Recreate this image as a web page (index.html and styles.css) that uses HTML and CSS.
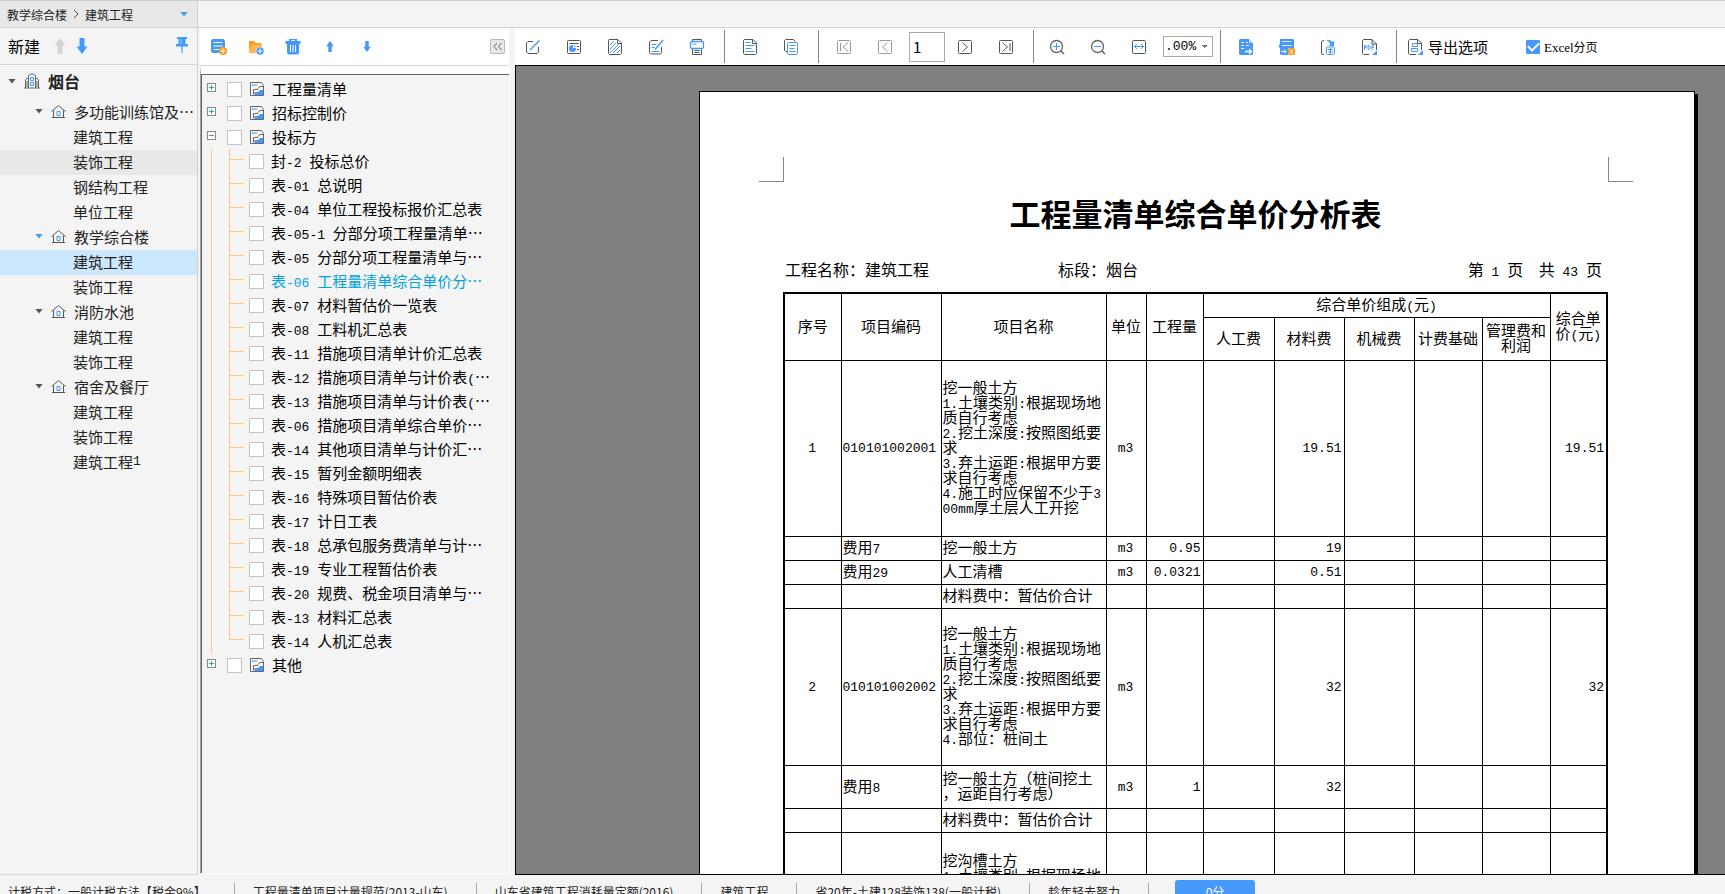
FILE: index.html
```html
<!DOCTYPE html>
<html lang="zh-CN">
<head>
<meta charset="utf-8">
<title>报表</title>
<link rel="stylesheet" href="styles.css">
</head>
<body>
<svg class="defs" aria-hidden="true">
  <symbol id="house" viewBox="0 0 15 15"><path d="M.5 7.500 7.500 1.500l7 6M2.500 6.500v7.500M12.500 6.500v7.500M1 13.500h13" fill="none" stroke="#555"/><path d="M6 7.500h3v4H6z" fill="none" stroke="#4499fb"/></symbol>
  <symbol id="report" viewBox="0 0 14 14"><path d="M.5.5h11l2 3v10H.5z" fill="#f8f8f8" stroke="#666"/><path d="M2 3h5" stroke="#8cc4ff" stroke-width="2"/><path d="M3.500 12.500V7.500h4l2-3h4" fill="none" stroke="#666"/><path d="M4.500 13v-3H8l2-2h3v5z" fill="#4499fb"/></symbol>
  <symbol id="up" viewBox="0 0 12 16"><path d="M6 0l5.500 7.500H8.500V16h-5V7.500H.5z" fill="currentColor"/></symbol>
  <symbol id="down" viewBox="0 0 12 16"><path d="M6 16l5.500-7.500H8.500V0h-5v8.500H.5z" fill="currentColor"/></symbol>
</svg>
<header class="topbar">
  <button class="crumb" type="button"><span>教学综合楼</span><svg class="chev" viewBox="0 0 6 10"><path d="M1 1l4 4-4 4" fill="none" stroke="#444"/></svg><span>建筑工程</span><i class="tri blue"></i></button>
</header>
<div class="main">
  <aside class="sidebar">
    <div class="side-head">
      <button type="button" class="new">新建</button>
      <button type="button" class="arrow off" aria-label="上移"><svg viewBox="0 0 12 16"><use href="#up"/></svg></button>
      <button type="button" class="arrow" aria-label="下移"><svg viewBox="0 0 12 16"><use href="#down"/></svg></button>
      <button type="button" class="pin" aria-label="固定"><svg viewBox="0 0 12 16"><path d="M1 0h10v2H9.500v5H12v2.500H0V7h2.500V2H1z" fill="#4499fb"/><path d="M5 2v5" stroke="#a9d0ff"/><path d="M6 9v7" stroke="#4499fb" stroke-width="1.200"/></svg></button>
    </div>
    <ul class="projects">
      <li class="root"><i class="tri"></i><svg class="build" viewBox="0 0 16 16"><path d="M4.500 15V2.500l2-1.500h3l2 1.500V15M4 5.500H2.500L1.500 7v8M12 5.500h1.500l1 1.500v8M0 15h16M3 8v6M13 8v6" fill="none" stroke="#666"/><path d="M6.500 4.500h3v3h-3zM6.500 9.500h3v3h-3z" fill="none" stroke="#4499fb"/></svg><b>烟台</b></li>
      <li class="group"><i class="tri"></i><svg><use href="#house"/></svg>多功能训练馆及…</li>
      <li class="unit">建筑工程</li>
      <li class="unit hover">装饰工程</li>
      <li class="unit">钢结构工程</li>
      <li class="unit">单位工程</li>
      <li class="group"><i class="tri blue"></i><svg><use href="#house"/></svg>教学综合楼</li>
      <li class="unit selected">建筑工程</li>
      <li class="unit">装饰工程</li>
      <li class="group"><i class="tri"></i><svg><use href="#house"/></svg>消防水池</li>
      <li class="unit">建筑工程</li>
      <li class="unit">装饰工程</li>
      <li class="group"><i class="tri"></i><svg><use href="#house"/></svg>宿舍及餐厅</li>
      <li class="unit">建筑工程</li>
      <li class="unit">装饰工程</li>
      <li class="unit">建筑工程<span class="n">1</span></li>
    </ul>
  </aside>

  <section class="reports">
    <div class="rep-head">
      <button type="button" aria-label="新建报表"><svg viewBox="0 0 16 16"><path d="M1.500 0h11L14 2v7a4 4 0 0 0-5 5v0H1.500L0 12.500v-11z" fill="#4499fb"/><path d="M2.500 3.500h9M2.500 7h9M2.500 10.500h6" stroke="#fff"/><circle cx="12" cy="12" r="4" fill="#ff9c1a"/><path d="M9.500 12h5M12 9.500v5" stroke="#fff"/></svg></button>
      <button type="button" aria-label="新建文件夹"><svg viewBox="0 0 16 16"><path d="M1 2h5l2 2h5v2H4L1 12z" fill="#ff9c1a"/><path d="M3.500 5.500H14V14H1z" fill="#ffb24d"/><circle cx="12" cy="12" r="4" fill="#4499fb" stroke="#fff" stroke-width=".5"/><path d="M9.500 12h5M12 9.500v5" stroke="#fff"/></svg></button>
      <button type="button" aria-label="删除"><svg viewBox="0 0 16 16"><path d="M4 0h8v2h3.500v3H14v9l-1.500 1.500h-9L2 14V5H.5V2H4z" fill="#4499fb"/><path d="M5.500 6v7M8 6v7M10.500 6v7" stroke="#fff"/><path d="M6 1.500h4" stroke="#cfe5ff"/></svg></button>
      <button type="button" aria-label="上移" class="sm"><svg viewBox="0 0 12 16"><use href="#up"/></svg></button>
      <button type="button" aria-label="下移" class="sm"><svg viewBox="0 0 12 16"><use href="#down"/></svg></button>
      <button type="button" class="collapse" aria-label="收起"><svg viewBox="0 0 13 13"><path d="M6 3 3 6.500l3 3.500M10.500 3l-3 3.500 3 3.500" fill="none" stroke="#666"/></svg></button>
    </div>
    <div class="rep-tree">
      <div class="node"><button type="button" class="exp plus" aria-label="展开"></button><label><input type="checkbox"><svg><use href="#report"/></svg><span>工程量清单</span></label></div>
      <div class="node"><button type="button" class="exp plus" aria-label="展开"></button><label><input type="checkbox"><svg><use href="#report"/></svg><span>招标控制价</span></label></div>
      <div class="node"><button type="button" class="exp" aria-label="折叠"></button><label><input type="checkbox"><svg><use href="#report"/></svg><span>投标方</span></label></div>
      <ul class="leaves">
        <li><label><input type="checkbox"><span>封<span class="n">-2 </span>投标总价</span></label></li>
        <li><label><input type="checkbox"><span>表<span class="n">-01 </span>总说明</span></label></li>
        <li><label><input type="checkbox"><span>表<span class="n">-04 </span>单位工程投标报价汇总表</span></label></li>
        <li><label><input type="checkbox"><span>表<span class="n">-05-1 </span>分部分项工程量清单…</span></label></li>
        <li><label><input type="checkbox"><span>表<span class="n">-05 </span>分部分项工程量清单与…</span></label></li>
        <li class="current"><label><input type="checkbox"><span>表<span class="n">-06 </span>工程量清单综合单价分…</span></label></li>
        <li><label><input type="checkbox"><span>表<span class="n">-07 </span>材料暂估价一览表</span></label></li>
        <li><label><input type="checkbox"><span>表<span class="n">-08 </span>工料机汇总表</span></label></li>
        <li><label><input type="checkbox"><span>表<span class="n">-11 </span>措施项目清单计价汇总表</span></label></li>
        <li><label><input type="checkbox"><span>表<span class="n">-12 </span>措施项目清单与计价表<span class="n">(</span>…</span></label></li>
        <li><label><input type="checkbox"><span>表<span class="n">-13 </span>措施项目清单与计价表<span class="n">(</span>…</span></label></li>
        <li><label><input type="checkbox"><span>表<span class="n">-06 </span>措施项目清单综合单价…</span></label></li>
        <li><label><input type="checkbox"><span>表<span class="n">-14 </span>其他项目清单与计价汇…</span></label></li>
        <li><label><input type="checkbox"><span>表<span class="n">-15 </span>暂列金额明细表</span></label></li>
        <li><label><input type="checkbox"><span>表<span class="n">-16 </span>特殊项目暂估价表</span></label></li>
        <li><label><input type="checkbox"><span>表<span class="n">-17 </span>计日工表</span></label></li>
        <li><label><input type="checkbox"><span>表<span class="n">-18 </span>总承包服务费清单与计…</span></label></li>
        <li><label><input type="checkbox"><span>表<span class="n">-19 </span>专业工程暂估价表</span></label></li>
        <li><label><input type="checkbox"><span>表<span class="n">-20 </span>规费、税金项目清单与…</span></label></li>
        <li><label><input type="checkbox"><span>表<span class="n">-13 </span>材料汇总表</span></label></li>
        <li><label><input type="checkbox"><span>表<span class="n">-14 </span>人机汇总表</span></label></li>
      </ul>
      <div class="node"><button type="button" class="exp plus" aria-label="展开"></button><label><input type="checkbox"><svg><use href="#report"/></svg><span>其他</span></label></div>
    </div>
  </section>

  <section class="viewer">
    <div class="tools">
      <button type="button" aria-label="编辑"><svg viewBox="0 0 16 16"><path d="M8 2.500H3L1.500 4v9L3 14.500h9l1.500-1.500V8" fill="none" stroke="#555"/><path d="M14.500 1.500 5 11" stroke="#4499fb" stroke-width="1.500"/></svg></button>
      <button type="button" aria-label="设计"><svg viewBox="0 0 16 16"><rect x="1.500" y="1.500" width="13" height="13" rx="1" fill="none" stroke="#555"/><path d="M3.500 4.500h9M11 7.500h2M11 10.500h2" stroke="#555"/><circle cx="6.500" cy="9.500" r="3.500" fill="#4499fb"/><path d="M7.500 9V6M7 8.500h4" stroke="#fff"/></svg></button>
      <button type="button" aria-label="水印"><svg viewBox="0 0 16 16"><path d="M2 .5h9l3.500 3.500v10.500l-1 1H2.500l-1-1V1.500zM10.500.5v4h4" fill="none" stroke="#555"/><path d="M3 6l4-4M3 10l6-6M3 14l9-9M6 14l7-7M10 14l3-3" stroke="#4499fb"/></svg></button>
      <button type="button" aria-label="填写"><svg viewBox="0 0 16 16"><path d="M10 1.500H3L1.500 3v10.500l1 1.500h10l1-1.500V8" fill="none" stroke="#555"/><path d="M3.500 5.500h5M3.500 8.500h3M3.500 12.500h8" stroke="#4499fb"/><path d="M15 1 7 10.500" stroke="#4499fb" stroke-width="1.500"/></svg></button>
      <button type="button" aria-label="打印"><svg viewBox="0 0 16 16"><path d="M3.500 3V.5h9V3M3.500 9.500v6h9v-6M5.500 11.500h5M5.500 13.500h5" fill="none" stroke="#555"/><rect x="1.500" y="2.500" width="13" height="7" rx="1.500" fill="#fff" stroke="#4499fb" stroke-width="1.300"/><path d="M3.500 5h4" stroke="#4499fb"/></svg></button>
      <i class="sep"></i>
      <button type="button" aria-label="单页"><svg viewBox="0 0 16 16"><path d="M2.500.5H11l3.500 3.500v10.500l-1 1h-11l-1-1V1.500zM10.500.5v4h4" fill="none" stroke="#555"/><path d="M3.500 3.500h5M3.500 6.500h9M3.500 9.500h6M3.500 12.500h9" stroke="#4499fb"/></svg></button>
      <button type="button" aria-label="多页"><svg viewBox="0 0 16 16"><path d="M4 12.500H2.500l-1-1v-10l1-1h8l2 2" fill="none" stroke="#555"/><rect x="4.500" y="3.500" width="10" height="12" rx="1" fill="#fff" stroke="#4499fb"/><path d="M6.500 6.500h6M6.500 9.500h5M6.500 12.500h6" stroke="#4499fb"/></svg></button>
      <i class="sep"></i>
      <button type="button" aria-label="首页"><svg viewBox="0 0 16 16" fill="none" stroke="#999"><rect x="1.500" y="1.500" width="13" height="13" rx="1"/><path d="M4.500 4v8M12 3.500 7 8l5 4.500"/></svg></button>
      <button type="button" aria-label="上一页"><svg viewBox="0 0 16 16" fill="none" stroke="#999"><rect x="1.500" y="1.500" width="13" height="13" rx="1"/><path d="M10.500 3.500 5.500 8l5 4.500"/></svg></button>
      <input class="page-no" type="text" value="1" aria-label="页码">
      <button type="button" aria-label="下一页"><svg viewBox="0 0 16 16" fill="none" stroke="#555"><rect x="1.500" y="1.500" width="13" height="13" rx="1"/><path d="M5.500 3.500l5 4.500-5 4.500"/></svg></button>
      <button type="button" aria-label="末页"><svg viewBox="0 0 16 16" fill="none" stroke="#555"><rect x="1.500" y="1.500" width="13" height="13" rx="1"/><path d="M4.500 3.500l5 4.500-5 4.500M12 4v8"/></svg></button>
      <i class="sep tight"></i>
      <button type="button" aria-label="放大"><svg viewBox="0 0 16 16" fill="none" stroke="#666"><circle cx="7.500" cy="7.500" r="6" stroke-width="1.300"/><path d="M12 12l3 3" stroke-width="1.500"/><path d="M4 7.500h7M7.500 4v7" stroke="#4499fb"/></svg></button>
      <button type="button" aria-label="缩小"><svg viewBox="0 0 16 16" fill="none" stroke="#666"><circle cx="7.500" cy="7.500" r="6" stroke-width="1.300"/><path d="M12 12l3 3" stroke-width="1.500"/><path d="M4 7.500h7" stroke="#4499fb"/></svg></button>
      <button type="button" aria-label="适合宽度"><svg viewBox="0 0 16 16" fill="none" stroke="#555"><rect x="1.500" y="1.500" width="13" height="13" rx="1"/><path d="M3.500 7.500h9M6 5 3.500 7.500 6 10M10 5l2.500 2.500L10 10" stroke="#4499fb"/></svg></button>
      <select class="zoom" aria-label="缩放"><option>.00%</option></select>
      <i class="sep"></i>
      <button type="button" aria-label="导出"><svg viewBox="0 0 16 16"><path d="M2 0h9v4h4v11l-1 1H2l-1-1V1z" fill="#4499fb"/><path d="M11 0l4 4h-4z" fill="#a9d0ff"/><path d="M3 3.500h3M8 3.500h2M3 6.500h3M8 6.500h3M3 9.500h3" stroke="#fff"/><path d="M7 12.500h6M11 10l2.500 2.500L11 15" fill="none" stroke="#fff" stroke-width="1.300"/></svg></button>
      <button type="button" aria-label="导出表格"><svg viewBox="0 0 16 16"><path d="M1 0h13l1 1v8H9v7H2l-1-1V9.500L0 8V6l1-1z" fill="#4499fb"/><path d="M3 2.500h9M3 6.500h10" stroke="#d8eaff"/><path d="M2 12.500h5M5 10.500l2 2-2 2" fill="none" stroke="#fff"/><rect x="9" y="9" width="7" height="7" rx="1.500" fill="#ff9c1a"/><path d="M11 10.500l3 4M14 10.500l-3 4" stroke="#fff"/></svg></button>
      <button type="button" aria-label="导入"><svg viewBox="0 0 16 16"><path d="M4 1.500H2.500L1.500 3v11l1 1.500H4" fill="none" stroke="#555"/><path d="M6 1q4-1 6 2l2-1v5H9l1.500-2Q9 2 6 1z" fill="#4499fb"/><rect x="6.500" y="8" width="8" height="7.500" rx="1" fill="#fff" stroke="#4499fb"/><path d="M8 10.500h5M8 13h5M10.500 9v6" stroke="#4499fb"/></svg></button>
      <button type="button" aria-label="导出PDF"><svg viewBox="0 0 16 16"><path d="M8 15.500H2.500l-1-1V1.500l1-1H11L15.500 5v6M11 .5V5h4.500" fill="none" stroke="#555"/><path d="M3.500 11V6.500H5v2H3.500M7 6.500v4h1l1-1v-2l-1-1zM11 11V6.500h2M11 8.500h2" fill="none" stroke="#4499fb"/><path d="M16 11.500V16h-5z" fill="#4499fb"/></svg></button>
      <i class="sep"></i>
      <button type="button" class="opts"><svg viewBox="0 0 16 16"><path d="M9 15.500H2.500l-1-1V1.500l1-1H11L14.500 4v7M10.500.5v4h4" fill="none" stroke="#555"/><path d="M5.500 4.500h5v3h-5zM4.500 9.500h6v3h-6z" fill="none" stroke="#4499fb"/><path d="M16 11v5h-5z" fill="#4499fb"/></svg>导出选项</button>
      <label class="paging"><input type="checkbox" checked><span><span class="xl">Excel</span>分页</span></label>
    </div>
    <div class="canvas">
      <article class="sheet">
        <div class="marks"><i class="mark left"></i><i class="mark right"></i></div>
        <div class="body">
          <h1>工程量清单综合单价分析表</h1>
          <div class="info"><span>工程名称：建筑工程</span><span>标段：烟台</span><span class="pages">第<span class="n"> 1 </span>页<span class="n">  </span>共<span class="n"> 43 </span>页</span></div>
          <table>
            <colgroup><col class="w57"><col class="w100"><col class="w165"><col class="w40"><col class="w57"><col class="w71"><col class="w70"><col class="w70"><col class="w68"><col class="w68"><col class="w57"></colgroup>
            <thead>
              <tr class="h-top"><th rowspan="2">序号</th><th rowspan="2">项目编码</th><th rowspan="2">项目名称</th><th rowspan="2">单位</th><th rowspan="2">工程量</th><th colspan="5">综合单价组成<span class="n">(</span>元<span class="n">)</span></th><th rowspan="2">综合单<br>价<span class="n">(</span>元<span class="n">)</span></th></tr>
              <tr class="h-mid"><th>人工费</th><th>材料费</th><th>机械费</th><th>计费基础</th><th>管理费和<br>利润</th></tr>
            </thead>
            <tbody>
              <tr class="r176"><td class="c n">1</td><td class="n">010101002001</td><td>挖一般土方<br><span class="n">1.</span>土壤类别<span class="n">:</span>根据现场地<br>质自行考虑<br><span class="n">2.</span>挖土深度<span class="n">:</span>按照图纸要<br>求<br><span class="n">3.</span>弃土运距<span class="n">:</span>根据甲方要<br>求自行考虑<br><span class="n">4.</span>施工时应保留不少于<span class="n">3</span><br><span class="n">00mm</span>厚土层人工开挖</td><td class="c n">m3</td><td></td><td></td><td class="r n">19.51</td><td></td><td></td><td></td><td class="r n">19.51</td></tr>
              <tr class="r24"><td></td><td>费用<span class="n">7</span></td><td>挖一般土方</td><td class="c n">m3</td><td class="r n">0.95</td><td></td><td class="r n">19</td><td></td><td></td><td></td><td></td></tr>
              <tr class="r24"><td></td><td>费用<span class="n">29</span></td><td>人工清槽</td><td class="c n">m3</td><td class="r n">0.0321</td><td></td><td class="r n">0.51</td><td></td><td></td><td></td><td></td></tr>
              <tr class="r24"><td></td><td></td><td>材料费中：暂估价合计</td><td></td><td></td><td></td><td></td><td></td><td></td><td></td><td></td></tr>
              <tr class="r157"><td class="c n">2</td><td class="n">010101002002</td><td>挖一般土方<br><span class="n">1.</span>土壤类别<span class="n">:</span>根据现场地<br>质自行考虑<br><span class="n">2.</span>挖土深度<span class="n">:</span>按照图纸要<br>求<br><span class="n">3.</span>弃土运距<span class="n">:</span>根据甲方要<br>求自行考虑<br><span class="n">4.</span>部位：桩间土</td><td class="c n">m3</td><td></td><td></td><td class="r n">32</td><td></td><td></td><td></td><td class="r n">32</td></tr>
              <tr class="h-mid"><td></td><td>费用<span class="n">8</span></td><td>挖一般土方（桩间挖土<br>，运距自行考虑）</td><td class="c n">m3</td><td class="r n">1</td><td></td><td class="r n">32</td><td></td><td></td><td></td><td></td></tr>
              <tr class="r24"><td></td><td></td><td>材料费中：暂估价合计</td><td></td><td></td><td></td><td></td><td></td><td></td><td></td><td></td></tr>
              <tr class="r176 cut"><td></td><td></td><td>挖沟槽土方<br><span class="n">1.</span>土壤类别<span class="n">:</span>根据现场地</td><td></td><td></td><td></td><td></td><td></td><td></td><td></td><td></td></tr>
            </tbody>
          </table>
        </div>
      </article>
    </div>
  </section>
</div>
<footer class="status">
  <span>计税方式：一般计税方法【税金9%】</span>
  <span>工程量清单项目计量规范(2013-山东)</span>
  <span>山东省建筑工程消耗量定额(2016)</span>
  <span>建筑工程</span>
  <span>省20年-土建128装饰138(一般计税)</span>
  <span>趁年轻去努力</span>
  <button type="button">0分</button>
</footer>
</body>
</html>
```
FILE: styles.css
```css
* { box-sizing: border-box; }
body {
  margin: 0;
  height: 100vh;
  display: grid;
  grid-template-rows: 28px minmax(0, 1fr) 19px;
  overflow: hidden;
  background: #f4f4f4;
  color: #000;
  font: 15px/15px "Noto Sans CJK SC", sans-serif;
}
button { margin: 0; padding: 0; border: 0; background: none; font: inherit; color: inherit; }
ul { list-style: none; margin: 0; padding: 0; }
svg { display: block; flex: none; width: 16px; height: 16px; }
.defs { position: absolute; width: 0; height: 0; }
.n { font-family: "Liberation Mono", monospace; font-size: 13px; line-height: 1px; white-space: pre; }
.tri { flex: none; width: 8px; height: 5px; background: #555; clip-path: polygon(0 0, 100% 0, 50% 100%); }
.tri.blue { background: #4499fb; }

.topbar { display: flex; border-top: 1px solid #ccc; border-bottom: 1px solid #d4d4d4; }
.crumb {
  width: 198px; padding: 0 9px 0 7px; display: flex; align-items: center; gap: 6px;
  background: #e8e8e8; border-right: 1px solid #d0d0d0; font-size: 12px; color: #222;
}
.chev { width: 6px; height: 10px; }
.crumb .tri { margin-left: auto; }

.main { display: grid; grid-template-columns: 198px 313px minmax(0, 1fr); min-height: 0; }
.sidebar { border-right: 1px solid #d0d0d0; border-bottom: 1px solid #d8d8d8; color: #222; overflow: hidden; }
.side-head { height: 37px; display: flex; align-items: center; padding: 0 9px 0 8px; border-bottom: 1px solid #d4d4d4; }
.new { font-size: 16px; margin-right: 14px; color: #000; }
.arrow { margin-right: 10px; color: #4499fb; }
.arrow.off { color: #d4d4d4; }
.arrow svg, .pin svg { width: 12px; }
.pin { margin-left: auto; padding-bottom: 2px; }
.projects li { height: 25px; display: flex; align-items: center; padding-bottom: 3px; white-space: nowrap; overflow: hidden; }
.projects .root { height: 35px; padding-left: 8px; gap: 8px; font-size: 16px; }
.projects .group { padding-left: 35px; gap: 8px; }
.projects .unit { padding-left: 73px; }
.group svg { width: 15px; height: 15px; }
.projects .hover { background: #e8e8e8; }
.projects .selected { background: #cce8ff; }

.reports { padding: 0 0 1px 2px; display: flex; flex-direction: column; min-height: 0; }
.rep-head {
  height: 38px; flex: none; display: flex; align-items: center; padding: 0 4px 0 8px; gap: 16px;
  background: #fff; border-bottom: 1px solid #d4d4d4; margin-right: 2px;
}
.rep-head button { width: 21px; display: flex; justify-content: center; color: #4499fb; }
.rep-head .sm svg { height: 11px; }
.rep-head .collapse { margin-left: auto; width: 15px; height: 15px; background: #e8e8e8; border: 1px solid #b8b8b8; border-radius: 2px; }
.collapse svg { width: 13px; height: 13px; }
.rep-tree {
  flex: 1; min-height: 0; overflow: hidden; margin-right: 1px; padding: 3px 0 0 6px; background: #f4f4f4;
  border: 1px solid #fff; border-top: 8px solid #fff; border-left: 1px solid #a0a0a0; box-shadow: inset 1px 1px #646464;
}
.node, .leaves li { height: 24px; display: flex; align-items: center; }
.node label, .leaves label { display: flex; align-items: center; gap: 8px; white-space: nowrap; }
.node label > span, .leaves label > span { padding-bottom: 2px; }
.leaves label { gap: 7px; }
.rep-tree input { appearance: none; flex: none; margin: 0; width: 15px; height: 15px; background: #fff; border: 1px solid #c4c4c4; }
.node svg { width: 14px; height: 14px; }
.exp {
  width: 9px; height: 9px; margin: 0 11px 3px 0; border: 1px solid #888;
  background: linear-gradient(#25a5cc, #25a5cc) center / 5px 1px no-repeat #fff;
}
.exp.plus {
  background: linear-gradient(#25a5cc, #25a5cc) center / 5px 1px no-repeat,
    linear-gradient(#25a5cc, #25a5cc) center / 1px 5px no-repeat #fff;
}
.leaves { margin-left: 4px; border-left: 1px solid #ffc880; }
.leaves li { padding-left: 17px; }
.leaves li::before {
  content: ""; width: 14px; align-self: stretch; margin-right: 5px; border-left: 1px solid #ffc880;
  background: linear-gradient(#ffc880, #ffc880) 0 10px / 14px 1px no-repeat;
}
.leaves li:last-child::before { align-self: flex-start; height: 11px; }
.current { color: #00a2dd; }

.viewer { margin-left: 4px; display: flex; flex-direction: column; min-width: 0; min-height: 0; }
.tools { height: 37px; flex: none; display: flex; align-items: center; background: #fff; padding-left: 1px; white-space: nowrap; }
.tools button { flex: none; width: 33px; margin-right: 8px; display: flex; justify-content: center; }
.sep { flex: none; width: 1px; height: 33px; background: #888; margin: 0 8px 0 3px; }
.sep.tight { margin-right: 6px; }
.page-no { width: 36px; height: 30px; margin: 0 3px 0 0; padding: 0 3px; border: 1px solid #a8a8a8; font: 15px "Noto Sans CJK SC", sans-serif; }
.zoom {
  appearance: none; width: 50px; height: 21px; margin: 0 4px 0 0; padding: 0 0 0 1px; border: 1px solid #a8a8a8; border-radius: 0; color: #000;
  font: 13px/19px "Liberation Mono", monospace;
  background: linear-gradient(135deg, #777 50%, transparent 50%) 41px 8px / 3px 3px no-repeat,
    linear-gradient(225deg, #777 50%, transparent 50%) 38px 8px / 3px 3px no-repeat #fff;
}
.tools .opts { width: auto; margin: 0 38px 0 2px; align-items: center; gap: 5px; }
.paging { display: flex; align-items: center; gap: 4px; font-size: 12px; }
.paging input {
  appearance: none; margin: 0; width: 14px; height: 14px; border-radius: 1px; background: #4499fb; display: grid; place-items: center;
}
.paging input:checked::before { content: ""; width: 9px; height: 5px; margin-bottom: 3px; border: solid #fff; border-width: 0 0 2px 2px; rotate: -45deg; }
.xl { font-family: "Liberation Serif", serif; font-size: 13px; }

.canvas { flex: 1; min-height: 0; overflow: hidden; display: flex; justify-content: flex-end; align-items: flex-start; padding: 25px 30px 0 0; background: #808080; border: 1px solid #000; border-right: 0; }
.sheet { flex: none; width: 996px; min-height: 1400px; padding: 65px 61px 0 59px; background: #fff; border: 1px solid #000; box-shadow: 3px 3px #000; }
.marks { display: flex; justify-content: space-between; }
.mark { width: 25px; height: 25px; border: 0 solid #888; border-bottom-width: 1px; }
.mark.left { border-right-width: 1px; }
.mark.right { border-left-width: 1px; }
.body { margin: 0 25px 0 24px; }
h1 { margin: 11px 0 26px; font-size: 31px; line-height: 40px; font-weight: 700; text-align: center; }
.info { display: grid; grid-template-columns: 273px auto auto; padding: 0 6px 0 2px; margin-bottom: 13px; font-size: 16px; line-height: 20px; }
.pages { text-align: right; }
table { width: 100%; table-layout: fixed; border-collapse: collapse; border: 2px solid #000; }
th, td { border: 1px solid #000; padding: 0 1px 3px; font-weight: 400; text-align: left; vertical-align: middle; white-space: nowrap; line-height: 15px; }
th { text-align: center; }
td.n { line-height: 15px; padding: 1px 1px 0; }
td.c, td.r { padding-right: 2px; }
.c { text-align: center; }
td.r { text-align: right; }
td.c { text-align: center; }
.w40 { width: 40px; }
.w57 { width: 57px; }
.w68 { width: 68px; }
.w70 { width: 70px; }
.w71 { width: 71px; }
.w100 { width: 100px; }
.w165 { width: 165px; }
.h-top { height: 24px; }
.h-mid { height: 43px; }
.r24 { height: 24px; }
.r157 { height: 157px; }
.r176 { height: 176px; }
.cut td { vertical-align: top; padding-top: 19px; }

.status { display: flex; overflow: hidden; align-items: flex-start; padding: 8px 0 0 8px; font-size: 12px; line-height: 18px; color: #222; white-space: nowrap; }
.status span { flex: none; padding-right: 28px; margin-right: 18px; border-right: 1px solid #a0a8b4; height: 20px; }
.status button { flex: none; margin: -3px 0 0 8px; width: 80px; height: 24px; background: #4499fb; color: #fff; border-radius: 3px; }
```
